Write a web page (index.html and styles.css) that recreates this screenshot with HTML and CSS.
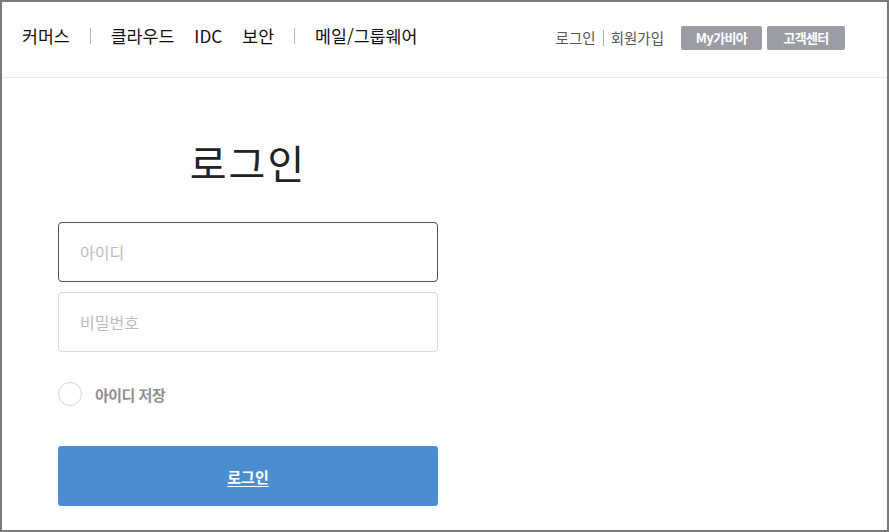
FILE: index.html
```html
<!DOCTYPE html>
<html lang="ko">
<head>
<meta charset="utf-8">
<title>로그인</title>
<link rel="stylesheet" href="styles.css">
</head>
<body>
<div class="frame">
  <header class="header">
    <nav class="gnb">
      <a class="gnb-item" href="#">커머스</a>
      <span class="gnb-sep"></span>
      <a class="gnb-item" href="#">클라우드</a>
      <a class="gnb-item" href="#">IDC</a>
      <a class="gnb-item" href="#">보안</a>
      <span class="gnb-sep"></span>
      <a class="gnb-item" href="#">메일/그룹웨어</a>
    </nav>
    <div class="util">
      <a class="util-link" href="#">로그인</a>
      <span class="util-sep"></span>
      <a class="util-link" href="#">회원가입</a>
      <div class="util-btns">
        <a class="util-btn btn-my" href="#">My가비아</a>
        <a class="util-btn btn-cs" href="#">고객센터</a>
      </div>
    </div>
  </header>
  <main class="main">
    <form class="login">
      <h1 class="login-title">로그인</h1>
      <div class="field field-focus"><span class="placeholder">아이디</span></div>
      <div class="field"><span class="placeholder">비밀번호</span></div>
      <label class="save">
        <span class="save-circle"></span>
        <span class="save-text">아이디 저장</span>
      </label>
      <a class="login-btn" href="#">로그인</a>
    </form>
  </main>
</div>
</body>
</html>
```

FILE: styles.css
```css
* { box-sizing: border-box; }
html, body { margin: 0; padding: 0; }
body {
  font-family: "Noto Sans CJK KR", "Noto Sans", sans-serif;
  background: #fff;
  color: #222;
}
a { text-decoration: none; color: inherit; }

.frame {
  width: 889px;
  height: 532px;
  border: 2px solid #7a7a7a;
  overflow: hidden;
  background: #fff;
}

.header {
  height: 76px;
  border-bottom: 1px solid #e9e9e9;
  display: flex;
  justify-content: space-between;
  align-items: flex-start;
  padding: 22px 42px 0 20px;
}

.gnb {
  display: flex;
  align-items: center;
  height: 24px;
}
.gnb-item {
  font-size: 17.3px;
  line-height: 24px;
  color: #111;
  margin-right: 20px;
}
.gnb-item:last-child { margin-right: 0; }
.gnb-sep {
  width: 1px;
  height: 16px;
  background: #b5b5b5;
  margin-right: 20px;
}

.util {
  display: flex;
  align-items: center;
  height: 28px;
}
.util-link {
  font-size: 14.5px;
  line-height: 20px;
  color: #555;
}
.util-sep {
  width: 1px;
  height: 16px;
  background: #aaa;
  margin: 0 7px;
}
.util-btns {
  display: flex;
  gap: 5px;
  margin-left: 17px;
}
.util-btn {
  height: 24px;
  line-height: 24px;
  border-radius: 2px;
  background: #9b9da4;
  color: #fff;
  font-size: 13px;
  font-weight: 700;
  text-align: center;
  letter-spacing: -0.6px;
}
.btn-my { width: 81px; }
.btn-cs { width: 78px; }

.main {
  padding: 56px 0 0 56px;
}
.login {
  width: 380px;
  display: flex;
  flex-direction: column;
}
.login-title {
  margin: 0 0 32px;
  font-size: 40px;
  font-weight: 400;
  line-height: 56px;
  text-align: center;
  color: #222;
  letter-spacing: 2px;
}
.field {
  height: 60px;
  border: 1px solid #dcdcdc;
  border-radius: 4px;
  padding-left: 21px;
  display: flex;
  align-items: center;
  margin-bottom: 10px;
}
.field-focus { border-color: #555; }
.placeholder {
  font-size: 16px;
  color: #bdbdbd;
}

.save {
  display: flex;
  align-items: center;
  margin-top: 20px;
  height: 24px;
}
.save-circle {
  width: 24px;
  height: 24px;
  border: 1px solid #d6d6d6;
  border-radius: 50%;
  margin-right: 13px;
}
.save-text {
  font-size: 15px;
  font-weight: 700;
  color: #8f8f8f;
  letter-spacing: -0.5px;
}

.login-btn {
  margin-top: 40px;
  height: 60px;
  border-radius: 3px;
  background: #4b8ecf;
  color: #fff;
  font-size: 15px;
  font-weight: 700;
  text-decoration: underline;
  text-underline-offset: 3px;
  display: flex;
  align-items: center;
  justify-content: center;
}
```
